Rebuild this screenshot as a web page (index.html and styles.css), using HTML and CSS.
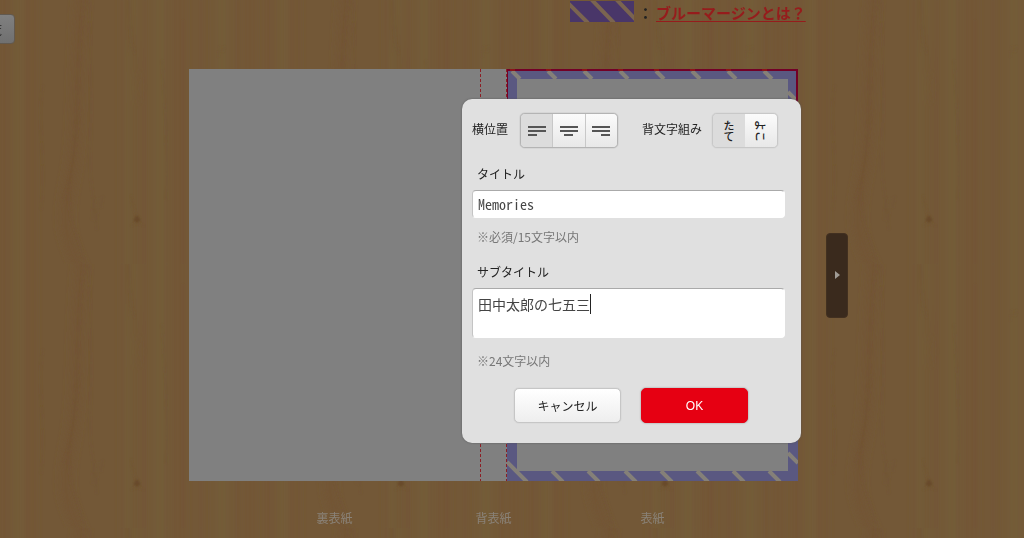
FILE: index.html
```html
<!DOCTYPE html>
<html lang="ja">
<head>
<meta charset="utf-8">
<title>表紙の編集</title>
<link rel="stylesheet" href="styles.css">
</head>
<body>
<svg class="wood" aria-hidden="true">
  <defs>
    <filter id="soft"><feGaussianBlur stdDeviation="4 1"/></filter>
    <filter id="fine"><feGaussianBlur stdDeviation="0.8"/></filter>
    <pattern id="grain" width="264" height="264" patternUnits="userSpaceOnUse">
      <rect width="264" height="264" fill="#735837"/>
      <g filter="url(#soft)" fill="none">
        <path d="M20-10V274M131-10V274M160-10V274M222-10V274" stroke="#735b39" stroke-width="15"/>
        <path d="M5-10V274M30-10V274M180-10V274M250-10V274" stroke="#735535" stroke-width="7"/>
        <path d="M82-10C74 80 80 130 70 180S68 240 82 274" stroke="#725434" stroke-width="9"/>
        <path d="M129-10C125 40 143 70 135 110V274" stroke="#725636" stroke-width="5"/>
      </g>
      <g filter="url(#fine)" fill="none" stroke="#6d5131" stroke-opacity=".4" stroke-width="1">
        <path d="M27-5V269M43 85C36 120 47 160 41 210M89 0C91 60 92 120 90 160C90 190 95 200 97 230"/>
        <path d="M80 110C74 140 75 170 63 200M84 0C76 60 80 120 70 180C64 220 82 240 84 264M122 0V264M167 0V264M183 20V264"/>
        <path d="M129 0C129 30 131 42 135 54M145 0V264M162 60C165 100 168 160 166 200M238 0V264M201 0V264M94 198L92 220M99 198L96 222M103 196L101 208M220 46L218 57M225 46L223 52"/>
      </g>
      <path d="M137 215L141 220L137 223L133 220Z" fill="#684a2b" filter="url(#fine)"/>
      <path d="M131 195Q133 211 137 216M131 226Q137 221 144 226" fill="none" stroke="#6f5231" stroke-opacity=".6" filter="url(#fine)"/>
    </pattern>
  </defs>
  <rect width="100%" height="100%" fill="url(#grain)"/>
</svg>
<main class="page">
  <header class="top">
    <button class="edge-button" type="button">一覧</button>
    <div class="legend">
      <svg class="swatch" viewBox="0 0 64 21" aria-hidden="true">
        <rect width="64" height="21" fill="#493669"/>
        <path d="M-4 0L18 22M21-2L44 22M46-2L69 22" stroke="#7a6450" stroke-width="4"/>
      </svg>
      <span>：</span><a class="help" href="#">ブルーマージンとは？</a>
    </div>
  </header>
  <section class="stage">
    <div class="cover">
      <div class="back"></div>
      <div class="spine"><span class="spine-text">の</span></div>
      <div class="front">
        <svg class="margin" viewBox="0 0 291 412" aria-hidden="true">
          <path d="M0 0H291V412H0ZM10 10V402H281V10Z" fill="#5a5881" fill-rule="evenodd"/>
          <path d="M5 2L13 10M41 2L49 10M77 2L85 10M113 2L121 10M149 2L157 10M185 2L193 10M221 2L229 10M257 2L265 10M281 23L291 33M281 384L291 394M0 393L20 413M45 402L56 413M81 402L92 413M118 402L129 413M154 402L165 413M190 402L201 413M226 402L237 413M262 402L273 413" stroke="#858078" stroke-width="4"/>
          <path d="M0 40V1H290V40" fill="none" stroke="#730027" stroke-width="2"/>
          <path d="M3 1H8M39 1H44M75 1H80M111 1H116M147 1H152M183 1H188M219 1H224M255 1H260" stroke="#8c1418" stroke-width="2"/>
        </svg>
      </div>
      <form class="dialog" role="dialog" aria-label="背文字の編集">
        <div class="tools">
          <span class="tool-label">横位置</span>
          <div class="group align-group">
            <button class="seg pressed" type="button" aria-label="左揃え"><svg width="18" height="10" viewBox="0 0 18 10"><path d="M0 1H18M0 5H18M0 9H9"/></svg></button>
            <button class="seg" type="button" aria-label="中央揃え"><svg width="18" height="10" viewBox="0 0 18 10"><path d="M0 1H18M0 5H18M4 9H13"/></svg></button>
            <button class="seg" type="button" aria-label="右揃え"><svg width="18" height="10" viewBox="0 0 18 10"><path d="M0 1H18M0 5H18M9 9H18"/></svg></button>
          </div>
          <span class="tool-label direction">背文字組み</span>
          <div class="group dir-group">
            <button class="seg pressed vertical" type="button"><span>たて</span></button>
            <button class="seg vertical sideways" type="button"><span>よこ</span></button>
          </div>
        </div>
        <label class="field-label" for="title">タイトル</label>
        <input class="field" id="title" type="text" value="Memories">
        <p class="hint">※必須/15文字以内</p>
        <label class="field-label second" for="subtitle">サブタイトル</label>
        <div class="area-wrap">
          <textarea class="field area" id="subtitle">田中太郎の七五三</textarea>
          <span class="caret"></span>
        </div>
        <p class="hint">※24文字以内</p>
        <div class="actions">
          <button class="action cancel" type="button">キャンセル</button>
          <button class="action ok" type="submit">OK</button>
        </div>
      </form>
    </div>
    <button class="next" type="button" aria-label="次へ"><svg width="5" height="8" viewBox="0 0 5 8"><path d="M0 0L5 4L0 8Z" fill="#a09b95"/></svg></button>
  </section>
  <div class="captions"><span>裏表紙</span><span>背表紙</span><span>表紙</span></div>
</main>
</body>
</html>
```

FILE: styles.css
```css
* { box-sizing: border-box; }
body {
  margin: 0;
  min-height: 100vh;
  overflow: hidden;
  background: #735837;
  color: #222;
  font-family: "Noto Sans CJK JP", sans-serif;
  font-size: 12px;
}
button, input, textarea { font: inherit; color: inherit; }
button { padding: 0; }
.wood { position: fixed; inset: 0; width: 100%; height: 100%; z-index: -1; }
.top { display: flex; height: 69px; align-items: flex-start; }
.edge-button {
  flex: none;
  width: 60px;
  height: 30px;
  margin: 14px 0 0 -45px;
  padding-right: 12px;
  border: 1px solid #62594f;
  border-radius: 4px;
  background: linear-gradient(#808080, #707070);
  text-align: right;
}
.legend {
  display: flex;
  margin-left: 555px;
  padding-top: 1px;
  font-size: 15px;
  font-weight: bold;
  line-height: 24px;
  white-space: nowrap;
}
.swatch { width: 64px; height: 21px; margin-right: 4px; }
.help { margin-left: 3px; color: #961c1c; text-underline-offset: 2px; }
.stage { display: flex; align-items: center; padding-left: 189px; gap: 28px; }
.cover {
  position: relative;
  display: grid;
  grid-template-columns: 291px 27px 291px;
  height: 412px;
  background: #808080;
}
.spine {
  overflow: hidden;
  background:
    repeating-linear-gradient(#8b1f25 0 3px, transparent 3px 5px) left / 1px 100% no-repeat,
    repeating-linear-gradient(#8b1f25 0 3px, transparent 3px 5px) right / 1px 100% no-repeat;
  padding-top: 24px;
  text-align: center;
}
.spine-text { font-size: 10px; line-height: 14px; color: #555; }
.margin { display: block; width: 100%; height: 100%; }
.dialog {
  position: absolute;
  left: 273px;
  top: 30px;
  width: 339px;
  padding: 14px 16px 20px 10px;
  border-radius: 10px;
  background: #e0e0e0;
  box-shadow: 0 0 2px #555;
}
.tools { display: flex; align-items: center; margin-bottom: 17px; }
.tool-label { padding-bottom: 4px; line-height: 18px; white-space: nowrap; }
.group {
  display: flex;
  height: 35px;
  border: 1px solid #b4b4b4;
  border-radius: 5px;
  overflow: hidden;
}
.align-group { width: 98px; margin-left: 12px; box-shadow: 0 0 1px #777; }
.direction { margin-left: 24px; }
.dir-group { width: 66px; margin-left: 10px; border-color: #c8c8c8; box-shadow: 0 0 1px #aaa; }
.seg {
  display: flex;
  flex: 1;
  align-items: center;
  justify-content: center;
  border: 0;
  background: linear-gradient(#fbfbfb, #e8e8e8);
}
.align-group .seg + .seg { border-left: 1px solid #c8c8c8; }
.seg.pressed { background: #dcdcdc; }
.seg path { stroke: #555; stroke-width: 2; }
.vertical span { writing-mode: vertical-rl; font-size: 11px; font-weight: 500; line-height: 14px; }
.sideways span { text-orientation: sideways; }
.field-label { display: block; padding-left: 5px; margin-bottom: 7px; line-height: 18px; }
.second { margin-top: 17px; }
.field {
  display: block;
  width: 100%;
  height: 28px;
  padding: 0 5px;
  border: 1px solid #fff;
  border-top-color: #aaa;
  border-left-color: #c4c4c4;
  border-radius: 4px;
  outline: 0;
  background: #fff;
  color: #444;
  font-family: "Noto Sans Mono CJK JP", "Noto Sans CJK JP", monospace;
  font-size: 14px;
}
.area { height: 50px; padding-top: 5px; line-height: 20px; resize: none; overflow: hidden; }
.area-wrap { position: relative; }
.caret { position: absolute; left: 118px; top: 6px; width: 1px; height: 20px; background: #222; }
.hint { margin: 10px 0 0; padding-left: 5px; color: #777; line-height: 18px; }
.area-wrap + .hint { margin-top: 14px; }
.actions { display: flex; gap: 20px; margin-top: 18px; padding-left: 42px; }
.action { width: 107px; height: 35px; border-radius: 5px; }
.cancel { border: 1px solid #c6c6c6; background: linear-gradient(#fff, #eee); box-shadow: 0 0 1px #aaa; }
.ok {
  border: 1px solid #e60012;
  background: #e60012;
  color: #fff;
  font-family: "Liberation Sans", sans-serif;
  box-shadow: 0 0 2px #888;
}
.next {
  display: flex;
  align-items: center;
  justify-content: center;
  width: 22px;
  height: 85px;
  border: 1px solid #423020;
  border-radius: 4px;
  background: #3a2a1d;
}
.captions {
  display: grid;
  grid-template-columns: 291px 27px 291px;
  padding: 28px 0 0 189px;
  color: #8a8278;
  line-height: 18px;
  text-align: center;
  white-space: nowrap;
}
.captions span { justify-self: center; }
```
